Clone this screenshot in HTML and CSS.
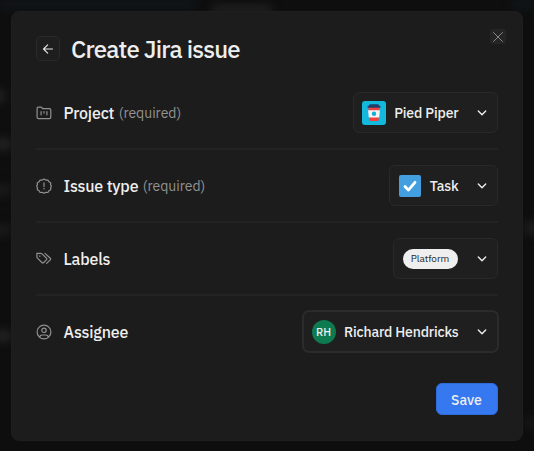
FILE: index.html
```html
<!DOCTYPE html>
<html lang="en">
<head>
<meta charset="utf-8">
<title>Create Jira issue</title>
<link rel="stylesheet" href="styles.css">
</head>
<body>
<div class="backdrop" aria-hidden="true">
  <i class="blob b1"></i><i class="blob b2"></i><i class="blob b3"></i><i class="blob b4"></i><i class="blob b5"></i><i class="blob b6"></i><i class="blob b7"></i><i class="blob b8"></i><i class="blob b9"></i><i class="blob b10"></i>
</div>
<main class="modal">
  <header class="header">
    <button class="back" aria-label="Back"><svg width="12" height="12" viewBox="0 0 12 12"><path d="M10.5 6h-9M5.7 1.8 1.5 6l4.2 4.2"/></svg></button>
    <h1 class="title">Create Jira issue</h1>
    <button class="close" aria-label="Close"><svg width="10" height="10" viewBox="0 0 10 10"><path d="m.5.5 9 9m0-9-9 9"/></svg></button>
  </header>
  <section class="row">
    <svg class="icon" viewBox="0 0 16 16"><path d="M1.1 3.4c0-.8.5-1.3 1.3-1.3h2.5c.4 0 .8.2 1 .6l.6.9h6.8c.9 0 1.5.6 1.5 1.4v7.2c0 .8-.6 1.4-1.4 1.4H2.6c-.9 0-1.5-.6-1.5-1.4zM5.1 6.6v3.2M8 6.6v1.5M10.9 6.6v3.2"/></svg>
    <span class="label">Project</span><span class="required">(required)</span>
    <button class="select">
      <svg class="avatar" viewBox="0 0 24 24"><rect width="24" height="24" rx="3" fill="#12b9dd"/><path d="M6.3 6h11.5l-1.2 13.2c0 .5-.4.8-.9.8H8.4c-.5 0-.9-.3-.9-.8z" fill="#f5403d"/><path d="M6.1 9.2h11.8l-.7 7.2H6.8z" fill="#f4f5f7"/><circle cx="12" cy="12.8" r="2.2" fill="#16afd2"/><path d="M7.7 3.2h8.6l.7 1.5h1.4v2H5.6v-2H7z" fill="#243b68"/></svg>
      <span class="value">Pied Piper</span>
      <svg class="chevron" viewBox="0 0 10 6"><path d="m1.3 1 3.7 3.7L8.7 1"/></svg>
    </button>
  </section>
  <section class="row">
    <svg class="icon" viewBox="0 0 16 16"><path d="m8 1.1 1.8 1 2.1-.1 1 1.8 1.8 1-.1 2.1.8 1.1-.8 1.9.1 1.8-1.8 1-1 1.8-2.1-.1-1.8.8-1.8-.8-2.1.1-1-1.8-1.8-1 .1-1.8L.7 8l.7-1.1-.1-2.1 1.8-1 1-1.8 2.1.1zM8 4.8v3.7M8 10.4v.6"/></svg>
    <span class="label">Issue type</span><span class="required">(required)</span>
    <button class="select task-select">
      <svg class="check" viewBox="0 0 22 22"><rect width="22" height="22" rx="2" fill="#449fe0"/><path d="m6 11.5 3.4 3.6L16 7.3"/></svg>
      <span class="value">Task</span>
      <svg class="chevron" viewBox="0 0 10 6"><path d="m1.3 1 3.7 3.7L8.7 1"/></svg>
    </button>
  </section>
  <section class="row">
    <svg class="icon" viewBox="0 0 16 16"><path d="M.9 2.4v3.6c0 .4.2.8.5 1.1l4.5 4.4c.6.6 1.3.6 1.8 0l2.7-2.6c.5-.5.5-1.2 0-1.7L6 2.8c-.3-.3-.7-.4-1.1-.4zM9 2.4l5.3 4.9c.5.5.5 1.1 0 1.6l-3.7 3.5M3.8 4.8v.7"/></svg>
    <span class="label">Labels</span>
    <button class="select">
      <span class="pill">Platform</span>
      <svg class="chevron" viewBox="0 0 10 6"><path d="m1.3 1 3.7 3.7L8.7 1"/></svg>
    </button>
  </section>
  <section class="row">
    <svg class="icon" viewBox="0 0 16 16"><circle cx="8" cy="8" r="6.9"/><circle cx="8" cy="6.3" r="2.2"/><path d="M3.6 13c.3-1.4 1.3-2 2.7-2h3.4c1.4 0 2.4.6 2.7 2"/></svg>
    <span class="label">Assignee</span>
    <button class="select active">
      <span class="initials">RH</span>
      <span class="value">Richard Hendricks</span>
      <svg class="chevron" viewBox="0 0 10 6"><path d="m1.3 1 3.7 3.7L8.7 1"/></svg>
    </button>
  </section>
  <footer class="footer"><button class="save">Save</button></footer>
</main>
</body>
</html>
```
FILE: styles.css
```css
* { box-sizing: border-box; }
body { margin: 0; width: 534px; height: 451px; padding: 11px; overflow: hidden; background: #0e0e0e; color: #eee; font-family: "IBM Plex Sans", Roboto, sans-serif; }
button { font: inherit; color: inherit; padding: 0; margin: 0; }
svg { display: block; flex: none; fill: none; stroke-linecap: round; stroke-linejoin: round; }
.backdrop { position: absolute; inset: 0; overflow: hidden; }
.blob { position: absolute; background: #262626; filter: blur(5px); }
.b1 { left: 212px; top: 6px; width: 60px; height: 7px; }
.b2 { left: 0; top: 0; width: 195px; height: 9px; background: #10171b; }
.b3 { left: -8px; top: 90px; width: 12px; height: 12px; }
.b4 { left: -6px; top: 139px; width: 17px; height: 10px; }
.b5 { left: -6px; top: 331px; width: 17px; height: 10px; }
.b6 { left: 526px; top: 222px; width: 12px; height: 12px; background: #222; }
.b7 { left: 512px; top: 0; width: 22px; height: 9px; background: #10171b; }
.b8 { left: 524px; top: 418px; width: 15px; height: 10px; background: #171717; }
.b9 { left: -6px; top: 185px; width: 17px; height: 10px; background: #1c1c1c; }
.b10 { left: -6px; top: 225px; width: 17px; height: 10px; background: #1c1c1c; }
.modal { position: relative; width: 512px; height: 430px; padding: 24px; border: 1px solid #1e1e1e; border-radius: 8px; background: #1c1c1c; }
.header { display: flex; height: 41px; align-items: flex-start; }
.back { display: grid; place-items: center; width: 24px; height: 25px; border: 1px solid #292929; border-radius: 5px; background: #1e1e1e; }
.back svg { stroke: #e6e6e6; stroke-width: 1.1; }
.title { margin: 0 0 0 11px; font-size: 24px; line-height: 27px; font-weight: 500; letter-spacing: -.8px; white-space: nowrap; }
.close { display: grid; place-items: center; margin: -7px -8px 0 auto; width: 16px; height: 15px; border: 0; border-radius: 2px; background: #252525; }
.close svg { stroke: #858585; }
.row { display: flex; align-items: center; height: 73px; border-bottom: 2px solid #232323; }
.row:nth-of-type(4) { border-color: transparent; }
.icon { width: 16px; height: 16px; margin-right: 11.5px; stroke: #919191; stroke-width: 1.2; }
.label { font-size: 16px; font-weight: 500; letter-spacing: -.18px; white-space: nowrap; }
.required { margin-left: 4.5px; font-size: 14px; letter-spacing: -.03px; color: #939393; white-space: nowrap; }
.select { display: flex; align-items: center; margin-left: auto; height: 41px; padding: 0 10px 0 8px; border: 1px solid #292929; border-radius: 6px; background: #1f1f1f; }
.task-select { padding-left: 9px; }
.active { height: 43px; margin-right: -1px; padding-left: 7.5px; border: 2px solid #2b2b2b; border-radius: 7px; }
.avatar { width: 24px; height: 24px; }
.check { width: 22px; height: 22px; }
.check path { stroke: #fff; stroke-width: 2.8; }
.value { margin-left: 8.5px; font-size: 14px; font-weight: 500; letter-spacing: -.14px; white-space: nowrap; }
.active .value { letter-spacing: -.18px; }
.chevron { width: 10px; height: 6px; margin-left: 18.5px; stroke: #ededed; stroke-width: 1.4; }
.pill { display: block; width: 55px; height: 20px; margin: 0 1px 0 1px; border-radius: 10px; background: #efefef; color: #272727; font-size: 10px; line-height: 20px; text-align: center; }
.initials { display: block; width: 24px; height: 24px; border-radius: 50%; background: #0e7a50; font-size: 11px; line-height: 24px; font-weight: 500; text-align: center; }
.footer { display: flex; justify-content: flex-end; padding-top: 14px; }
.save { width: 62px; height: 32px; padding: 1px 1px 0 0; border: 1px solid #2f6bd9; border-radius: 6px; background: #3578ef; font-size: 14px; font-weight: 500; }
```
